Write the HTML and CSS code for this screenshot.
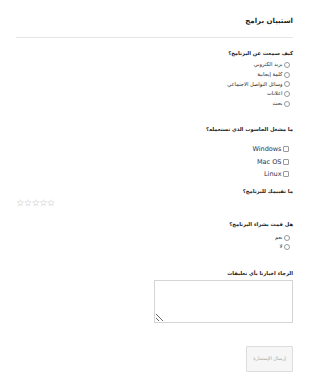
FILE: index.html
```html
<!DOCTYPE html>
<html lang="ar" dir="rtl">

<head>
    <meta charset="UTF-8">
    <meta name="viewport" content="width=device-width, initial-scale=1.0">
    <title>استبيان برامج</title>

    <!-- Styles -->
    <link rel="stylesheet" href="styles.css">
</head>
<body>

    <form class="survey">
        <h1 class="title">استبيان برامج</h1>
        <hr class="divider">

        <!-- Q1 -->
        <div class="question q-source">
            <p class="q-label">كيف سمعت عن البرنامج؟</p>
            <label class="option"><span class="radio"></span>بريد الكتروني</label>
            <label class="option"><span class="radio"></span>كلمة إيجابية</label>
            <label class="option"><span class="radio"></span>وسائل التواصل الاجتماعي</label>
            <label class="option"><span class="radio"></span>اعلانات</label>
            <label class="option"><span class="radio"></span>بحث</label>
        </div>

        <!-- Q2 -->
        <div class="question q-os">
            <p class="q-label">ما مشغل الحاسوب الذي تستعمله؟</p>
            <label class="option os"><span class="check"></span>Windows</label>
            <label class="option os"><span class="check"></span>Mac OS</label>
            <label class="option os"><span class="check"></span>Linux</label>
        </div>

        <!-- Q3 -->
        <div class="question q-rating">
            <p class="q-label">ما تقييمك للبرنامج؟</p>
            <div class="stars">☆☆☆☆☆</div>
        </div>

        <!-- Q4 -->
        <div class="question q-bought">
            <p class="q-label">هل قمت بشراء البرنامج؟</p>
            <label class="option"><span class="radio"></span>نعم</label>
            <label class="option"><span class="radio"></span>لا</label>
        </div>

        <!-- Q5 -->
        <div class="question q-comments">
            <p class="q-label">الرجاء اخبارنا بأي تعليقات</p>
            <textarea class="comments"></textarea>
        </div>

        <div class="actions">
            <button type="button" class="submit">إرسال الإستمارة</button>
        </div>
    </form>

</body>
</html>
```

FILE: styles.css
```css
:root {
    --text-color: #222;
    --os-color: #27344f;
    --line-color: #e6e6e6;
    --input-border: #9a9a9a;
}

* {
    box-sizing: border-box;
    margin: 0;
    padding: 0;
}

body {
    font-family: "DejaVu Sans", Tahoma, sans-serif;
    background-color: #fff;
    color: var(--text-color);
}

.survey {
    padding: 0 17px 0 16px;
}

.title {
    font-size: 7px;
    font-weight: bold;
    line-height: 10px;
    padding-top: 16px;
}

.divider {
    border: none;
    border-top: 1px solid var(--line-color);
    margin-top: 11px;
}

.q-label {
    font-size: 5.2px;
    font-weight: bold;
    line-height: 8px;
}

.q-source { margin-top: 11px; }
.q-os { margin-top: 17px; }
.q-rating { margin-top: 6.75px; }
.q-bought { margin-top: 12px; }
.q-comments { margin-top: 17.3px; }

.q-source .q-label { margin-bottom: 3.4px; }
.q-os .q-label { margin-bottom: 9.75px; }
.q-rating .q-label { margin-bottom: 3px; }
.q-bought .q-label { margin-bottom: 4.5px; }
.q-comments .q-label { margin-bottom: 3px; }

.option {
    display: flex;
    align-items: center;
    gap: 1.5px;
    font-size: 5.2px;
    line-height: 9.6px;
    padding-right: 3px;
}

.option.os {
    font-size: 6.5px;
    line-height: 12.5px;
    color: var(--os-color);
    padding-right: 4px;
}

.radio {
    width: 6px;
    height: 6px;
    border: 0.6px solid var(--input-border);
    border-radius: 50%;
    flex-shrink: 0;
}

.check {
    width: 6px;
    height: 6px;
    border: 0.6px solid var(--input-border);
    border-radius: 1px;
    flex-shrink: 0;
}

.stars {
    direction: ltr;
    text-align: left;
    font-size: 9.5px;
    line-height: 10px;
    color: #bbb;
    letter-spacing: -0.8px;
}

.comments {
    display: block;
    width: 139px;
    height: 43px;
    border: 1px solid #d4d4d4;
    resize: both;
}

.actions {
    margin-top: 22px;
}

.submit {
    width: 47px;
    height: 26px;
    font-family: "DejaVu Sans", Tahoma, sans-serif;
    font-size: 4.8px;
    color: #a8a8a8;
    background-color: #f6f6f6;
    border: 1px solid #dcdcdc;
    border-radius: 1px;
}
```
